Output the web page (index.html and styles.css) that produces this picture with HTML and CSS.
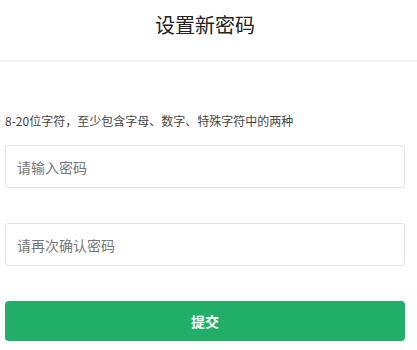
FILE: index.html
```html
<!DOCTYPE html>
<html lang="zh-CN">
<head>
  <meta charset="UTF-8" />
  <meta name="viewport" content="width=device-width, initial-scale=1.0" />
  <title>设置新密码</title>
  <link rel="stylesheet" href="styles.css">
</head>
<body>
  <header class="page-header">
    <h1 class="page-title">设置新密码</h1>
  </header>
  <main class="form-wrap">
    <p class="hint">8-20位字符，至少包含字母、数字、特殊字符中的两种</p>
    <input class="field" type="password" placeholder="请输入密码" />
    <input class="field" type="password" placeholder="请再次确认密码" />
    <button class="submit-btn" type="button">提交</button>
  </main>
</body>
</html>
```

FILE: styles.css
```css
* {
  padding: 0;
  margin: 0;
  box-sizing: border-box;
  font-family: "Noto Sans CJK SC", "Noto Sans", sans-serif;
}
body {
  background-color: #fff;
  color: #333;
}
.page-header {
  padding: 13px 7px 23px 0;
  border-bottom: 2px solid #f2f2f2;
  text-align: center;
}
.page-title {
  font-size: 20px;
  font-weight: normal;
  line-height: 24px;
  color: #222;
}
.form-wrap {
  display: flex;
  flex-direction: column;
  padding: 50px 12px 0 5px;
}
.hint {
  font-size: 12px;
  line-height: 18px;
  color: #444;
  margin-bottom: 15px;
}
.field {
  height: 43px;
  border: 1px solid #e3e3e3;
  border-radius: 3px;
  padding: 0 11px;
  font-size: 14px;
  color: #333;
  margin-bottom: 35px;
  outline: none;
}
.field::placeholder {
  color: #777;
}
.submit-btn {
  height: 40px;
  border: none;
  border-radius: 4px;
  background-color: #21ae68;
  color: #fff;
  font-size: 14px;
  font-weight: bold;
  cursor: pointer;
}
```
